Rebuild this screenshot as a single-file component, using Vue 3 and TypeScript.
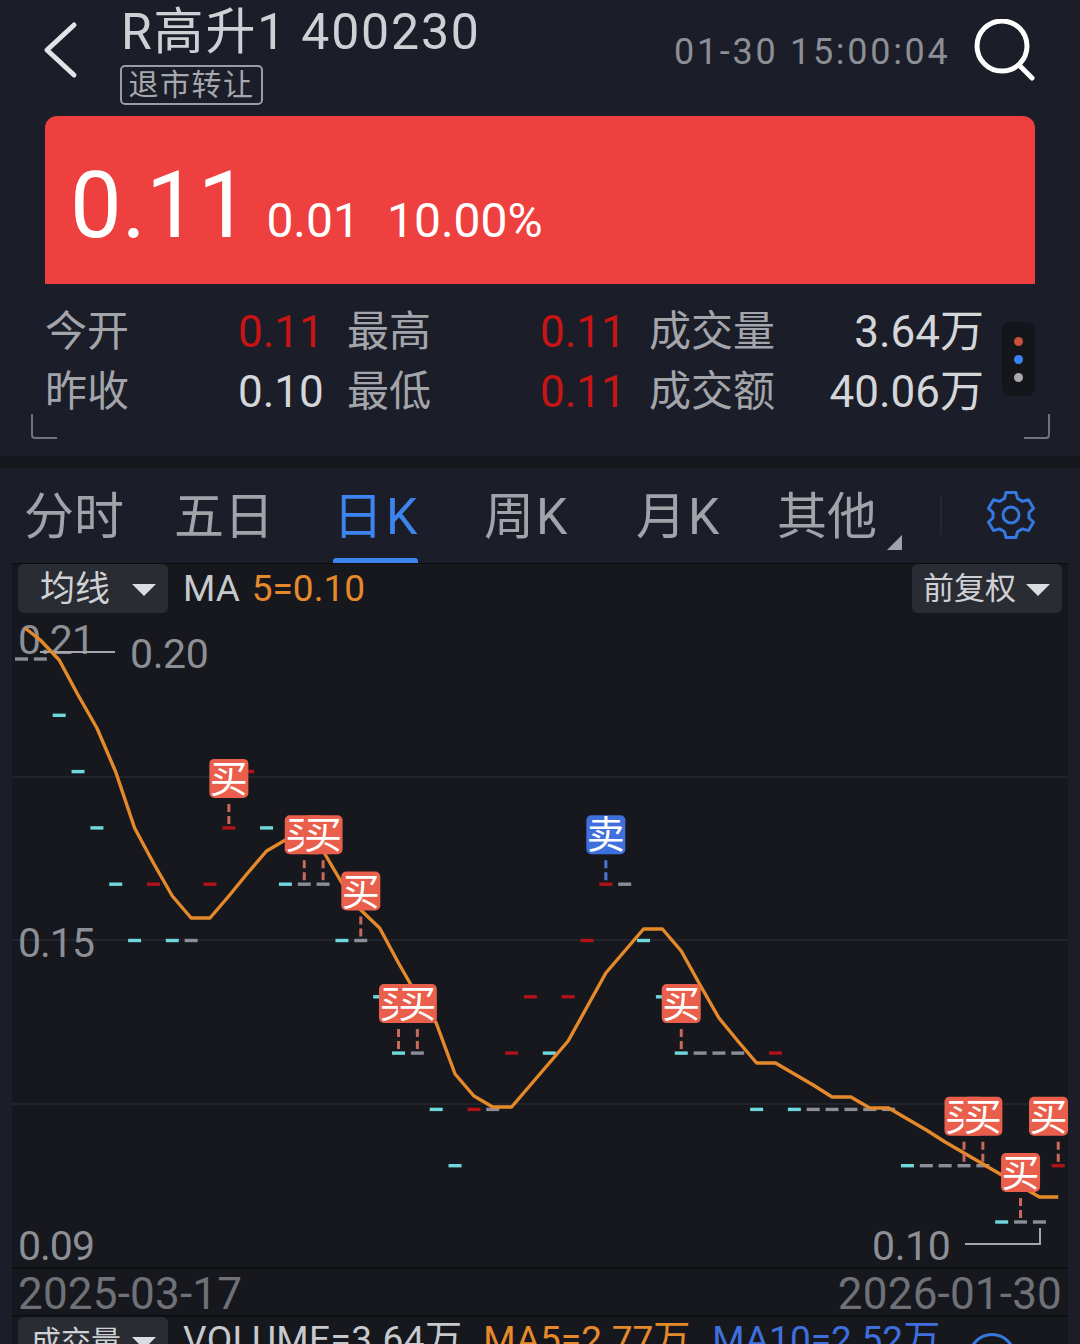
<script setup lang="ts">
type Kind = 'g' | 'c' | 'r'

const step = 18.85
const xAt = (i: number) => 21.5 + step * i
const levelY = (l: number) => 659 + 56.3 * l

const ticks: [number, Kind][] = [
  [0, 'g'], [0, 'g'], [1, 'c'], [2, 'c'], [3, 'c'], [4, 'c'], [5, 'c'], [4, 'r'], [5, 'c'], [5, 'g'],
  [4, 'r'], [3, 'r'], [2, 'r'], [3, 'c'], [4, 'c'], [4, 'g'], [4, 'g'], [5, 'c'], [5, 'g'], [6, 'c'],
  [7, 'c'], [7, 'g'], [8, 'c'], [9, 'c'], [8, 'r'], [8, 'g'], [7, 'r'], [6, 'r'], [7, 'c'], [6, 'r'],
  [5, 'r'], [4, 'r'], [4, 'g'], [5, 'c'], [6, 'c'], [7, 'c'], [7, 'g'], [7, 'g'], [7, 'g'], [8, 'c'],
  [7, 'r'], [8, 'c'], [8, 'g'], [8, 'g'], [8, 'g'], [8, 'g'], [8, 'g'], [9, 'c'], [9, 'g'], [9, 'g'],
  [9, 'g'], [9, 'g'], [10, 'c'], [10, 'g'], [10, 'g'], [9, 'r'],
]

const tickColor: Record<Kind, string> = { g: '#8b8d98', c: '#6fd8dc', r: '#b01218' }

const ma5 = [
  628, 640, 660, 695, 728, 772, 828, 863, 896, 918, 918, 896, 873, 851, 840, 829, 851, 883, 910, 928,
  963, 996, 1023, 1074, 1096, 1107, 1107, 1085, 1063, 1041, 1007, 973, 951, 929, 929, 951, 985, 1018, 1041, 1063,
  1063, 1074, 1085, 1097, 1097, 1108, 1108, 1119, 1130, 1142, 1153, 1164, 1175, 1186, 1197, 1197,
]
const maPoints = ma5.map((y, i) => `${i === 0 ? 25 : xAt(i)},${y}`).join(' ')

const signals = [
  { i: 11, t: '买' }, { i: 15, t: '买' }, { i: 16, t: '买' }, { i: 18, t: '买' }, { i: 20, t: '买' },
  { i: 21, t: '买' }, { i: 31, t: '卖' }, { i: 35, t: '买' }, { i: 50, t: '买' }, { i: 51, t: '买' },
  { i: 55, t: '买' }, { i: 53, t: '买' },
].map(s => {
  const top = levelY(ticks[s.i][0]) - 69
  const left = Math.min(xAt(s.i) - 19.5, 1029)
  return { ...s, top, left, stemX: xAt(s.i), sell: s.t === '卖' }
})

const stats = [
  [
    { l: '今开', v: '0.11', red: true },
    { l: '最高', v: '0.11', red: true },
    { l: '成交量', v: '3.64万', red: false },
  ],
  [
    { l: '昨收', v: '0.10', red: false },
    { l: '最低', v: '0.11', red: true },
    { l: '成交额', v: '40.06万', red: false },
  ],
]

const tabs = ['分时', '五日', '日K', '周K', '月K', '其他']
</script>

<template>
  <div class="page">
    <header class="head">
      <svg class="back" width="40" height="60" viewBox="0 0 40 60">
        <path d="M32 5 L5 30 L32 55" fill="none" stroke="#e2e3e6" stroke-width="5" stroke-linecap="round" stroke-linejoin="round" />
      </svg>
      <div class="title-box">
        <div class="title">R高升1 400230</div>
        <span class="tag">退市转让</span>
      </div>
      <div class="time">01-30 15:00:04</div>
      <svg class="search" width="62" height="62" viewBox="0 0 62 62">
        <circle cx="29" cy="27" r="25" fill="none" stroke="#fff" stroke-width="5" />
        <path d="M46 46 L59 59" stroke="#fff" stroke-width="5" stroke-linecap="round" />
      </svg>
    </header>

    <section class="price-card">
      <span class="price">0.11</span>
      <span class="change">0.01</span>
      <span class="change pct">10.00%</span>
    </section>

    <section class="stats">
      <div v-for="(row, r) in stats" :key="r" class="stat-row">
        <template v-for="(s, k) in row" :key="s.l">
          <span class="stat-label" :class="'lab-' + k">{{ s.l }}</span>
          <span class="stat-val" :class="['val-' + k, { red: s.red }]">{{ s.v }}</span>
        </template>
      </div>
      <div class="dots">
        <i class="dot d1"></i>
        <i class="dot d2"></i>
        <i class="dot d3"></i>
      </div>
      <i class="corner left"></i>
      <i class="corner right"></i>
    </section>

    <div class="sep"></div>

    <nav class="tabs">
      <span v-for="(t, i) in tabs" :key="t" class="tab" :class="['tab-' + i, { active: t === '日K' }]">{{ t }}</span>
      <i class="tab-more"></i>
      <i class="tab-div"></i>
      <svg class="gear" width="50" height="50" viewBox="0 0 50 50">
        <path
          d="M20 2.5 H30 L31.5 8.5 L36.5 11.4 L42.5 9.7 L47.5 18.3 L43 22.5 V28 L47.5 32 L42.5 40.6 L36.5 38.9 L31.5 41.8 L30 47.5 H20 L18.5 41.8 L13.5 38.9 L7.5 40.6 L2.5 32 L7 28 V22.5 L2.5 18.3 L7.5 9.7 L13.5 11.4 L18.5 8.5 Z"
          fill="none" stroke="#3578e0" stroke-width="3" stroke-linejoin="round"
        />
        <circle cx="25" cy="25" r="8" fill="none" stroke="#3578e0" stroke-width="3" />
      </svg>
    </nav>

    <section class="chart">
      <div class="toolbar">
        <div class="select">均线<i class="arrow"></i></div>
        <span class="ma-label">MA</span>
        <span class="ma-val">5=0.10</span>
        <div class="select right-select">前复权<i class="arrow"></i></div>
      </div>

      <svg class="plot" width="1056" height="654" viewBox="12 613 1056 654">
        <line v-for="y in [777, 940, 1104]" :key="y" x1="12" x2="1068" :y1="y" :y2="y" stroke="#272931" stroke-width="1.5" />

        <rect
          v-for="(t, i) in ticks" :key="i"
          :x="xAt(i) - 6.5" :y="levelY(t[0]) - 1.7" width="13" height="3.4"
          :fill="tickColor[t[1]]"
        />

        <text x="18" y="654" class="axis">0.21</text>
        <text x="130" y="668" class="axis wide">0.20</text>
        <text x="18" y="957" class="axis">0.15</text>
        <text x="18" y="1260" class="axis">0.09</text>
        <text x="872" y="1260" class="axis wide">0.10</text>
        <path d="M40 652 H115" fill="none" stroke="#a5a6ab" stroke-width="2" />
        <path d="M965 1244 H1040 V1228" fill="none" stroke="#a5a6ab" stroke-width="2" />

        <polyline :points="maPoints" fill="none" stroke="#e6892b" stroke-width="3.4" stroke-linejoin="round" />

        <g v-for="s in signals" :key="s.i">
          <line
            :x1="s.stemX" :x2="s.stemX" :y1="s.top + 45" :y2="s.top + 66"
            :stroke="s.sell ? '#4a78d8' : '#c8695c'" stroke-width="3" stroke-dasharray="8 4"
          />
          <rect :x="s.left" :y="s.top" width="39" height="39" rx="5" :fill="s.sell ? '#3f6fdc' : '#e95f4b'" />
          <text :x="s.left + 19.5" :y="s.top + 33" class="sig">{{ s.t }}</text>
        </g>
      </svg>

      <div class="dates">
        <span>2025-03-17</span>
        <span>2026-01-30</span>
      </div>

      <div class="toolbar vol">
        <div class="select small">成交量<i class="arrow"></i></div>
        <span class="ma-label">VOLUME=3.64万</span>
        <span class="ma-val v5">MA5=2.77万</span>
        <span class="ma-val v10">MA10=2.52万</span>
        <i class="ring"></i>
      </div>
    </section>
  </div>
</template>

<style scoped>
.page { width: 1080px; height: 1344px; overflow: hidden; background: #1b1e28; color: #d5d6da; font-family: Roboto, "Noto Sans CJK SC", sans-serif; }
.head { position: relative; height: 116px; display: flex; align-items: flex-start; box-sizing: border-box; padding-left: 42px; }
.back { margin-top: 20px; flex-shrink: 0; }
.title-box { margin-left: 38px; width: 502px; }
.title { font-size: 50px; line-height: 60px; margin: 2px 0 0 1px; color: #cfd0d4; white-space: nowrap; letter-spacing: 1.8px; }
.tag { display: inline-block; box-sizing: border-box; height: 40px; width: 143px; margin-top: 3px; border: 2px solid #9a9ca3; border-radius: 5px; font-size: 30px; line-height: 35px; text-align: center; color: #a6a8ae; letter-spacing: 1.5px; white-space: nowrap; }
.time { margin-left: 52px; margin-top: 28px; font-size: 36px; line-height: 48px; letter-spacing: 2.7px; color: #8d8f96; white-space: nowrap; }
.search { position: absolute; left: 973px; top: 19px; }

.price-card { height: 168px; margin: 0 45px; background: #ef4040; border-radius: 12px 12px 0 0; display: flex; align-items: baseline; padding-left: 25px; color: #fff; }
.price { font-size: 92px; line-height: 180px; }
.change { font-size: 48px; margin-left: 17px; }
.pct { margin-left: 27px; }

.stats { position: relative; height: 172px; box-sizing: border-box; padding: 18px 0 0 45px; }
.stat-row { display: grid; grid-template-columns: 193px 109px 193px 109px 190px 145px; height: 60px; align-items: center; font-size: 42px; line-height: 60px; }
.stat-label { color: #a3a5ab; white-space: nowrap; }
.stat-val { color: #d5d6da; white-space: nowrap; font-size: 44px; }
.stat-val.red { color: #c81414; }
.val-2 { text-align: right; justify-self: end; }
.dots { position: absolute; left: 1002px; top: 38px; width: 33px; height: 74px; background: #14161b; border-radius: 8px; display: flex; flex-direction: column; align-items: center; justify-content: center; gap: 9px; }
.dot { width: 9px; height: 9px; border-radius: 50%; }
.d1 { background: #c9503c; }
.d2 { background: #3b82f6; }
.d3 { background: #aaaaaa; }
.corner { position: absolute; top: 130px; width: 26px; height: 25px; box-sizing: border-box; border-bottom: 2px solid #6f727b; }
.corner.left { left: 31px; border-left: 2px solid #6f727b; border-bottom-left-radius: 4px; }
.corner.right { left: 1024px; border-right: 2px solid #6f727b; border-bottom-right-radius: 4px; }

.sep { height: 12px; background: #15171d; }

.tabs { position: relative; height: 95px; display: flex; align-items: center; font-size: 50px; color: #a1a3a9; }
.tab { position: absolute; top: 19px; line-height: 60px; white-space: nowrap; }
.tab-0 { left: 24px; }
.tab-1 { left: 174px; }
.tab-2 { left: 333px; letter-spacing: 3px; }
.tab-3 { left: 484px; letter-spacing: 2px; }
.tab-4 { left: 636px; letter-spacing: 2px; }
.tab-5 { left: 777px; }
.tab.active { color: #3d84ee; }
.tab.active::after { content: ""; position: absolute; left: 0; right: 2px; top: 71px; height: 5px; background: #3d84ee; border-radius: 3px 3px 0 0; }
.tab-more { position: absolute; left: 887px; top: 67px; width: 0; height: 0; border-left: 15px solid transparent; border-bottom: 15px solid #a1a3a9; }
.tab-div { position: absolute; left: 940px; top: 27px; width: 2px; height: 40px; background: #252832; }
.gear { position: absolute; left: 986px; top: 22px; }

.chart { box-sizing: border-box; margin: 0 12px; width: 1056px; height: 781px; background: #16181e; border-top: 1px solid #0b0c0f; display: flex; flex-direction: column; }
.toolbar { height: 49px; flex-shrink: 0; display: flex; align-items: center; padding: 0 6px; position: relative; font-size: 37px; }
.select { box-sizing: border-box; width: 150px; height: 49px; background: #2a2c33; border-radius: 6px; display: flex; align-items: center; font-size: 35px; line-height: 44px; padding-top: 3px; color: #d0d1d5; padding-left: 22px; position: relative; white-space: nowrap; }
.arrow { position: absolute; right: 12px; top: 20px; width: 0; height: 0; border-left: 12px solid transparent; border-right: 12px solid transparent; border-bottom: 0; border-top: 12px solid #dcdde0; }
.right-select { position: absolute; left: 900px; padding-left: 11px; padding-top: 1px; font-size: 31px; }
.ma-label { margin-left: 15px; color: #c8c9cd; white-space: nowrap; line-height: 46px; }
.ma-val { margin-left: 12px; color: #e6892b; white-space: nowrap; line-height: 46px; }
.plot { display: block; flex-shrink: 0; }
.axis { font-size: 41px; letter-spacing: -1px; fill: #8d8f96; font-family: Roboto, sans-serif; }
.axis.wide { letter-spacing: -0.4px; }
.sig { font-size: 38px; fill: #fff; text-anchor: middle; font-family: "Noto Sans CJK SC", sans-serif; }
.dates { height: 50px; flex-shrink: 0; box-sizing: border-box; padding: 4px 6px 0; display: flex; justify-content: space-between; align-items: center; font-size: 44px; letter-spacing: 0.2px; color: #6f7177; border-top: 2px solid #0e0f13; border-bottom: 2px solid #0e0f13; }
.vol { align-items: flex-start; padding-top: 0; height: 60px; }
.small { font-size: 30px; padding-left: 13px; padding-top: 0; }
.vol .ma-label { letter-spacing: 0.4px; }
.v5 { margin-left: 21px; }
.v10 { margin-left: 22px; color: #3f6fdc; }
.ring { position: absolute; left: 956px; top: 16px; width: 48px; height: 48px; box-sizing: border-box; border: 3px solid #3578e0; border-radius: 50%; }
</style>

<style>
html, body { background: #1b1e28; }
</style>
